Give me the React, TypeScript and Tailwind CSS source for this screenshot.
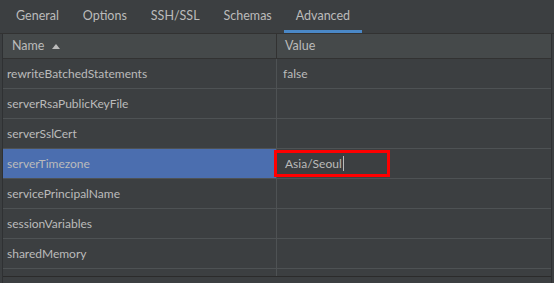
import React from 'react'

const tabs = ['General', 'Options', 'SSH/SSL', 'Schemas', 'Advanced']

const rows = [
  { name: 'rewriteBatchedStatements', value: 'false' },
  { name: 'serverRsaPublicKeyFile', value: '' },
  { name: 'serverSslCert', value: '' },
  { name: 'serverTimezone', value: 'Asia/Seoul', selected: true },
  { name: 'servicePrincipalName', value: '' },
  { name: 'sessionVariables', value: '' },
  { name: 'sharedMemory', value: '' },
]

export default function App() {
  return (
    <div
      className="w-[554px] h-[283px] overflow-hidden bg-[#3c3f41] text-[#bbbbbb] text-[12px] flex flex-col"
      style={{ fontFamily: 'Lato, "Liberation Sans", sans-serif' }}
    >
      {/* tabs */}
      <div className="h-[34px] flex pl-[4px] border-b border-[#323232] shrink-0">
        {tabs.map((t) => (
          <div key={t} className="relative h-full flex items-center px-[12px] text-[12.5px]">
            {t}
            {t === 'Advanced' && <div className="absolute left-0 right-0 bottom-[0px] h-[3px] bg-[#4a88c7]" />}
          </div>
        ))}
      </div>

      {/* table */}
      <div className="mx-[2px] flex-1 border-l border-r border-[#2f3133] flex flex-col">
        <div className="h-[25px] flex bg-[#45494a] border-b border-[#323232] shrink-0">
          <div className="w-[274px] flex items-center pl-[9px] gap-[8px] border-r border-[#323232] text-[12.5px]">
            <span>Name</span>
            <svg width="8" height="6" viewBox="0 0 8 6">
              <path d="M0 6 L4 1 L8 6 Z" fill="#bbbbbb" />
            </svg>
          </div>
          <div className="flex-1 flex items-center pl-[8px] text-[12.5px]">Value</div>
        </div>

        {rows.map((r) => (
          <div key={r.name} className="h-[30px] flex border-b border-[#4e5254] shrink-0">
            <div
              className={`w-[274px] flex items-center pl-[4px] pt-[1px] border-r border-[#4e5254] ${r.selected ? 'bg-[#4b6eaf]' : ''}`}
            >
              {r.name}
            </div>
            <div className="flex-1 flex items-center relative">
              {r.selected ? (
                <div className="ml-[-3px] w-[116px] h-[27px] border-[3px] border-[#ff0000] flex items-center pl-[8px]">
                  <span>{r.value}</span>
                  <span className="w-px h-[15px] bg-[#bbbbbb] ml-[1px]" />
                </div>
              ) : (
                <span className="pl-[6px] pt-[1px]">{r.value}</span>
              )}
            </div>
          </div>
        ))}

        <div className="h-[8px] flex border-b border-[#2b2b2b] shrink-0">
          <div className="w-[274px] border-r border-[#4e5254]" />
        </div>
      </div>
    </div>
  )
}
